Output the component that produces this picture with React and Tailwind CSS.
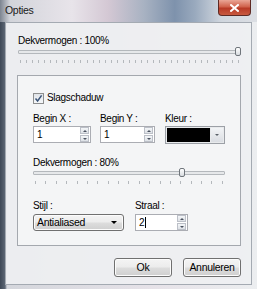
import React from 'react'

const btn =
  'rounded-[3px] border border-[#707070] bg-[linear-gradient(#f4f4f4,#ececec_48%,#dddddd_52%,#cfcfcf)] shadow-[inset_0_0_0_1px_#fcfcfc]'

function Ticks({ count }) {
  return (
    <div className="flex justify-between px-[2px] h-[3px]">
      {Array.from({ length: count }).map((_, i) => (
        <span key={i} className="w-px h-[3px] bg-[#b4b8bc]" />
      ))}
    </div>
  )
}

function Slider({ pos, ticks }) {
  return (
    <div className="flex flex-col gap-[4px]">
      <div className="relative h-[9px] flex items-center">
        <div className="w-full h-[4px] rounded-[1px] border border-[#b4b8bc] bg-[#e6e8ea]" />
        <div
          className="absolute top-0 w-[6px] h-[9px] rounded-[2px] border border-[#70767c] bg-[linear-gradient(#ffffff,#d8dce0)]"
          style={{ left: pos }}
        />
      </div>
      <Ticks count={ticks} />
    </div>
  )
}

function Spinner() {
  return (
    <div className="flex flex-col w-[9px] gap-px">
      <div className="h-[7px] border border-[#bcc0c8] bg-[linear-gradient(#f4f6f8,#dde1e6)] flex items-center justify-center">
        <span className="block w-0 h-0 border-l-[2px] border-r-[2px] border-b-[2px] border-l-transparent border-r-transparent border-b-[#4a5260]" />
      </div>
      <div className="h-[7px] border border-[#bcc0c8] bg-[linear-gradient(#f4f6f8,#dde1e6)] flex items-center justify-center">
        <span className="block w-0 h-0 border-l-[2px] border-r-[2px] border-t-[2px] border-l-transparent border-r-transparent border-t-[#4a5260]" />
      </div>
    </div>
  )
}

function SpinBox({ value, width, caret }) {
  return (
    <div
      className="flex items-center justify-between h-[17px] border border-[#abadb3] bg-white pl-[3px] pr-px"
      style={{ width }}
    >
      <span className="text-[10px] leading-none text-black flex items-center">
        {value}
        {caret && <span className="inline-block w-px h-[11px] bg-black ml-px" />}
      </span>
      <Spinner />
    </div>
  )
}

export default function App() {
  return (
    <div
      className="w-[257px] h-[289px] flex flex-col overflow-hidden tracking-[-0.3px] bg-[linear-gradient(90deg,#3e4856_0px,#5c6674_5px,#d4d6dc_7px,#e6e2e8_60%,#eceef0)]"
      style={{ fontFamily: '"Liberation Sans", Arial, sans-serif' }}
    >
      {/* title bar */}
      <div className="h-[22px] flex items-start justify-between pl-[5px] pr-[6px] bg-[linear-gradient(90deg,#7c8490_0px,#d2d4da_10px,#e8e4ea_28%,#d4c8d4_42%,#a8b2c2_56%,#7e92ac_68%,#9aaabe_76%,#d0d6de_86%,#dcdfe4)]">
        <span className="text-[10.5px] text-[#1a1a1a] mt-[4px] leading-[12px]">Opties</span>
        <div className="w-[33px] h-[16px] rounded-b-[4px] border border-t-0 border-[#5e2a24] bg-[linear-gradient(#eaa696,#d0624c_45%,#b83a26_55%,#c85a40)] flex items-center justify-center">
          <svg width="9" height="8" viewBox="0 0 9 8">
            <path d="M1 1 L8 7 M8 1 L1 7" stroke="#ffffff" strokeWidth="2" strokeLinecap="square" />
          </svg>
        </div>
      </div>

      {/* client area */}
      <div className="flex-1 flex ml-[5px] mr-[5px] mb-[4px]">
        <div className="flex-1 flex flex-col border border-[#a4aab2] bg-[#eef0f2]/90 pl-[11px] pr-[10px] pt-[12px]">
          <span className="text-[10px] leading-[12px] text-black pl-px">Dekvermogen : 100%</span>
          <div className="ml-px">
            <Slider pos={217} ticks={37} />
          </div>

          {/* group box */}
          <div className="mt-[12px] h-[171px] w-[224px] border border-[#a4a8ae] bg-[#f4f5f6] pl-[15px] pt-[16px] flex flex-col">
            <label className="flex items-center gap-[3px]">
              <span className="w-[11px] h-[11px] border border-[#8e8f8f] bg-[linear-gradient(#dfe3e8,#f6f8fa)] flex items-center justify-center">
                <svg width="9" height="9" viewBox="0 0 9 9">
                  <path d="M1.5 4.5 L3.6 7 L7.6 1.4" fill="none" stroke="#3a5478" strokeWidth="1.5" />
                </svg>
              </span>
              <span className="text-[10px] leading-[12px] text-black">Slagschaduw</span>
            </label>

            <div className="mt-[9px] flex">
              <div className="flex flex-col gap-[1px]">
                <span className="text-[10px] leading-[12px] text-black">Begin X :</span>
                <SpinBox value="1" width={58} />
              </div>
              <div className="flex flex-col gap-[1px] ml-[9px]">
                <span className="text-[10px] leading-[12px] text-black">Begin Y :</span>
                <SpinBox value="1" width={55} />
              </div>
              <div className="flex flex-col gap-[1px] ml-[10px]">
                <span className="text-[10px] leading-[12px] text-black">Kleur :</span>
                <div className="flex w-[60px] h-[18px] border border-[#9ca0a6] bg-[#e8eaec] p-px gap-px">
                  <div className="flex-1 bg-black" />
                  <div className="w-[12px] flex items-center justify-center bg-[linear-gradient(#f2f4f6,#dadde2)]">
                    <span className="block w-0 h-0 border-l-[2px] border-r-[2px] border-t-[2px] border-l-transparent border-r-transparent border-t-[#5a6068]" />
                  </div>
                </div>
              </div>
            </div>

            <span className="mt-[13px] text-[10px] leading-[11px] text-black">Dekvermogen : 80%</span>
            <div className="w-[192px]">
              <Slider pos={146} ticks={19} />
            </div>

            <div className="mt-[16px] flex">
              <div className="flex flex-col gap-[2px]">
                <span className="text-[10px] leading-[12px] text-black">Stijl :</span>
                <div className={`w-[91px] h-[17px] flex items-center justify-between pl-[3px] pr-[6px] ${btn}`}>
                  <span className="text-[10.5px] leading-none text-black">Antialiased</span>
                  <span className="block w-0 h-0 border-l-[3px] border-r-[3px] border-t-[3px] border-l-transparent border-r-transparent border-t-black" />
                </div>
              </div>
              <div className="flex flex-col gap-[2px] ml-[11px]">
                <span className="text-[10px] leading-[12px] text-black">Straal :</span>
                <SpinBox value="2" width={53} caret />
              </div>
            </div>
          </div>

          {/* buttons */}
          <div className="mt-[12px] flex justify-end gap-[11px] pr-[0px]">
            <button className={`w-[58px] h-[19px] text-[10.5px] leading-none text-black ${btn}`}>Ok</button>
            <button className={`w-[58px] h-[19px] text-[10.5px] leading-none text-black ${btn}`}>Annuleren</button>
          </div>
        </div>
      </div>
    </div>
  )
}
